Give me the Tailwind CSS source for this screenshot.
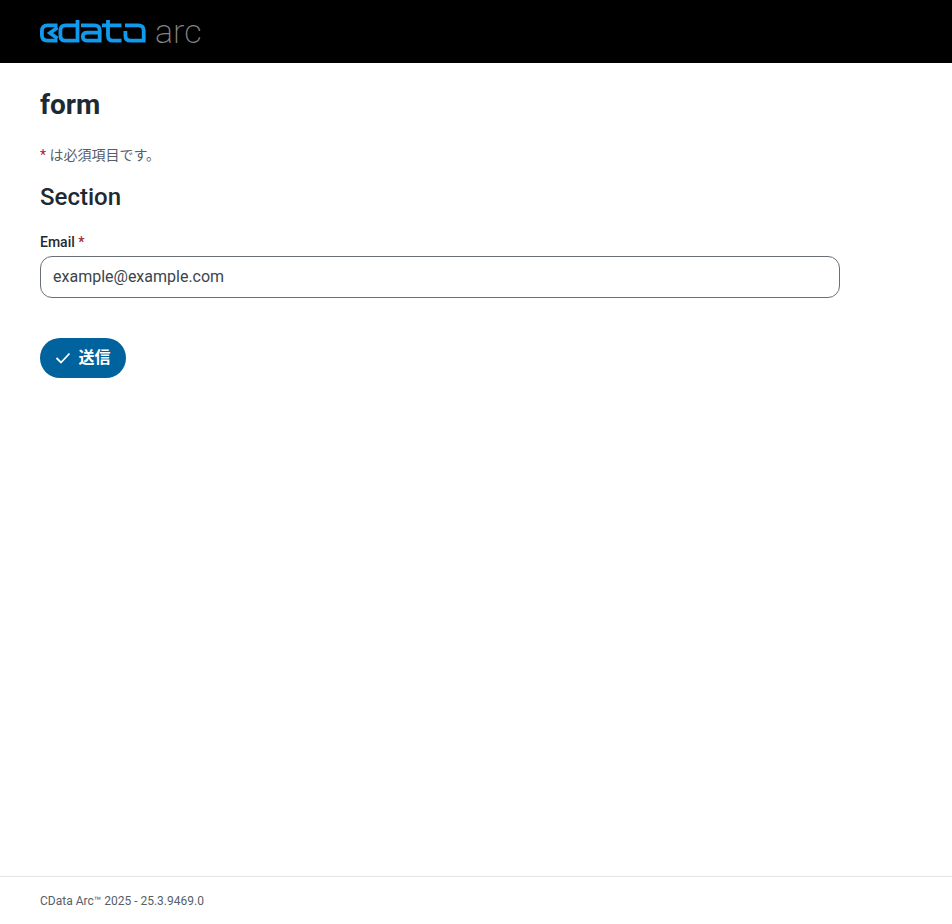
<!DOCTYPE html>
<html lang="ja">
<head>
    <meta charset="utf-8"/>
    <meta content="width=device-width, initial-scale=1" name="viewport"/>
    <title>form</title>
    <script src="https://cdn.jsdelivr.net/npm/@tailwindcss/browser@4"></script>
</head>
<body class="min-h-screen bg-white flex flex-col font-['Roboto','Noto_Sans_CJK_JP',sans-serif] text-[#1e2a32]">
    <!-- Header -->
    <header class="h-[63px] bg-black flex items-center pl-10 gap-[9px]">
        <svg class="w-[106px] h-[24px]" viewBox="0 0 106 24" fill="none" stroke="#1199ee" stroke-width="3.8" aria-label="cdata">
            <path d="M17.500 5.400H7.500Q1.900 5.400 1.900 11V15Q1.900 20.700 7.500 20.700H17.500"/>
            <path d="M17.500 7.500L10 13L17.500 18.500"/>
            <path d="M37.500 0V20.700H25.500Q20.400 20.700 20.400 15.500V10.500Q20.400 5.400 25.500 5.400H37.500"/>
            <path d="M41 5.400H54.500Q59.700 5.400 59.700 10.500V22.600M59.500 20.700H47.500Q42.800 20.700 42.800 16.500Q42.800 12.600 47.500 12.600H58.500"/>
            <path d="M68 0V15.500Q68 20.700 73 20.700H81.500M62 5.400H81.500"/>
            <path d="M85 5.400H98Q103.700 5.400 103.700 10.500V22.600M103.500 20.700H90.500Q85.400 20.700 85.400 15.500V11"/>
        </svg>
        <span class="text-[34px] leading-none font-extralight text-[#858585] mt-[-1px]">arc</span>
    </header>

    <main class="flex-1 pl-10">
        <h1 class="mt-[25px] text-[28px] leading-[34px] font-bold">form</h1>
        <p class="mt-[23px] text-sm leading-[20px] text-[#55606a]"><span class="text-[#a3243b]">*</span> は必須項目です。</p>
        <h2 class="mt-[17px] text-2xl leading-[30px] font-medium">Section</h2>
        <form>
            <label class="block mt-[20px] text-sm leading-[20px] font-medium">Email <span class="text-[#a3243b]">*</span></label>
            <input type="text" value="example@example.com" class="block mt-[4px] w-[800px] h-[42px] px-3 pb-[2px] border border-[#6b7076] rounded-xl text-base text-[#3b454d] bg-white outline-none"/>
            <button type="button" class="mt-[40px] h-[40px] w-[86px] rounded-full bg-[#00639e] text-white text-base font-bold flex items-center justify-center gap-[7px]">
                <svg class="w-4 h-4" viewBox="0 0 16 16" fill="none" stroke="white" stroke-width="1.8"><path d="M1.500 8L6 12.500L14.500 3.500"/></svg>
                送信
            </button>
        </form>
    </main>

    <!-- Footer -->
    <footer class="h-[48px] border-t border-[#e3e5e7] pl-10 pt-[15px] text-xs leading-[18px] text-[#55606a]">CData Arc™ 2025 - 25.3.9469.0</footer>
</body>
</html>
